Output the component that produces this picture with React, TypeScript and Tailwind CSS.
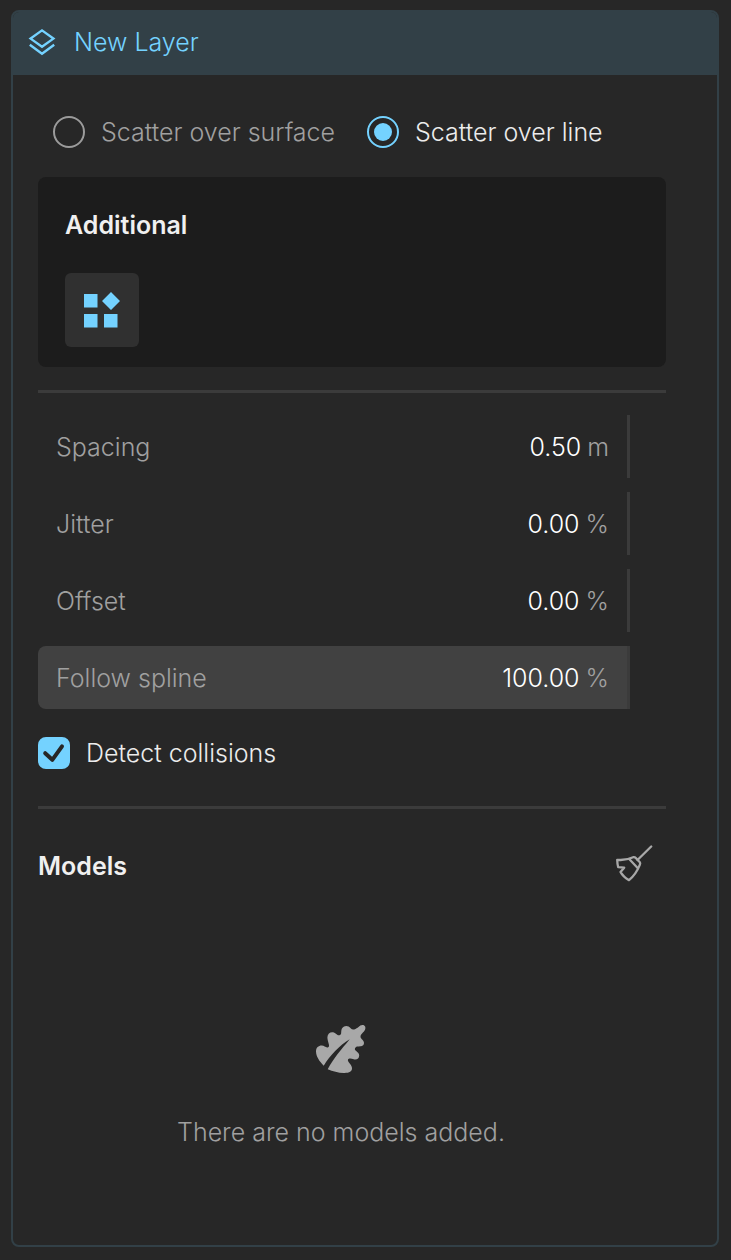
import { useState } from "react";

type Mode = "surface" | "line";

interface Param {
  id: string;
  label: string;
  value: string;
  unit: string;
  filled?: boolean;
}

const params: Param[] = [
  { id: "spacing", label: "Spacing", value: "0.50", unit: "m" },
  { id: "jitter", label: "Jitter", value: "0.00", unit: "%" },
  { id: "offset", label: "Offset", value: "0.00", unit: "%" },
  { id: "follow-spline", label: "Follow spline", value: "100.00", unit: "%", filled: true },
];

function LayersIcon() {
  return (
    <svg className="h-8 w-8 shrink-0" viewBox="0 0 32 32" fill="none" stroke="currentColor" strokeWidth="2.4" aria-hidden="true">
      <path d="M16 4.4 27.4 12.6 16 20.8 4.6 12.6Z" />
      <path d="M3.8 18.8 16 27.8 28.2 18.8" />
    </svg>
  );
}

function WidgetsIcon() {
  return (
    <svg className="h-[38px] w-[38px]" viewBox="0 0 38 38" fill="currentColor" aria-hidden="true">
      <path d="M1 3h13.5v13.5H1zM1 23h13.5v13.5H1zM21 23h13.5v13.5H21zM28 1l9 9-9 9-9-9z" />
    </svg>
  );
}

function BroomIcon() {
  return (
    <svg className="h-[38px] w-[38px]" viewBox="0 0 38 38" fill="none" stroke="currentColor" strokeWidth="2.3" strokeLinecap="round" strokeLinejoin="round" aria-hidden="true">
      <path d="M36.2 1.5 22.5 15" />
      <path d="M2.2 14.8C8 15.4 13.5 14.4 18.2 12.2Q19.7 11.8 20.8 13L24.8 17.2Q25.6 18.4 24.8 19.9C22.3 26 18.7 31.4 14 35.2C10.2 33 7.2 30.1 5.5 26.9L9.2 22.7 3.2 22.2Q2.3 18.9 2.2 14.8Z" />
      <path d="M14.2 14 22.9 23.2" />
    </svg>
  );
}

function LeafIcon() {
  return (
    <svg className="h-[52px] w-[52px]" viewBox="0 0 52 52" fill="currentColor" aria-hidden="true">
      <path d="M8.7 41.7C4.5 37.3 1 32.5 1 27.2C1 23.8 3.6 21.5 6.8 21.6C9.5 21.7 11 24.3 13.2 23.2C15.6 22 12.3 17.5 12.4 13.2C12.5 9.6 15.2 7.8 18 8.2C21.2 8.6 22.4 12.3 25 11.1C27.2 10 25.3 7 27.3 4C28.8 1.8 31.5 1.4 33.6 2.5C36 3.8 36.2 6 39.2 5.4C43 4.6 44.2 1 47.5 1C50.2 1 51 3.5 50 5.8C48.8 8.8 45 10.2 45.6 13.2C46 15.2 49 16 49 19C49 22.5 45 22.4 42.8 22.4C40.7 22.5 39.3 24.3 40.2 26.1C41 27.7 44.2 28.5 44.2 31.4C44.2 34.5 41.6 36.2 38.7 35.3C36.5 34.6 34 33.8 33 35.5C32 37.5 36.8 40.6 37 44C37.2 47.5 34.4 48.8 29.5 49C23.8 49.2 18 47.3 12.7 45.3C18.5 34.2 26.1 25.8 34.7 15.2C24.2 21.5 15.2 31.2 8.7 41.7Z" />
    </svg>
  );
}

function ModeRadio({ label, value, mode, onSelect }: { label: string; value: Mode; mode: Mode; onSelect: (m: Mode) => void }) {
  return (
    <label className="flex items-center gap-4 text-[#a0a0a0] has-checked:text-[#ececec]">
      <input
        type="radio"
        name="scatter-mode"
        value={value}
        checked={mode === value}
        onChange={() => onSelect(value)}
        className="grid size-8 shrink-0 appearance-none place-content-center rounded-full border-2 border-[#9b9b9b] before:size-[18px] before:rounded-full checked:border-[#74d2ff] checked:before:bg-[#74d2ff]"
      />
      {label}
    </label>
  );
}

function ParamRow({ param }: { param: Param }) {
  const [value, setValue] = useState(param.value);
  return (
    <div
      className={`flex h-[63px] items-center rounded-l-lg border-r-[3px] border-[#3b3b3b] pr-[18px] pl-[18px] text-[#a0a0a0] ${param.filled ? "bg-[#414141]" : ""}`}
    >
      <label htmlFor={param.id} className="flex-1">
        {param.label}
      </label>
      <input
        id={param.id}
        type="text"
        inputMode="decimal"
        value={value}
        onChange={(e) => setValue(e.target.value)}
        className="w-32 bg-transparent text-right text-white outline-none"
      />
      <span className="ml-1.5">{param.unit}</span>
    </div>
  );
}

export default function App() {
  const [mode, setMode] = useState<Mode>("line");
  const [detect, setDetect] = useState(true);

  return (
    <div className="flex min-h-screen flex-col bg-[#272727] pt-[10px] pr-3 pb-[13px] pl-[11px] font-['Inter',sans-serif] text-[25px] leading-8 font-light">
      <main className="flex flex-1 flex-col overflow-hidden rounded-lg border-2 border-[#324047]">
        <header className="flex h-[63px] items-center gap-4 bg-[#324047] pb-1 pl-[13px] text-[#74d2ff]">
          <LayersIcon />
          <h1>New Layer</h1>
        </header>

        <div className="flex flex-1 flex-col pt-[41px] pr-[51px] pl-[25px]">
          <div role="radiogroup" aria-label="Scatter mode" className="flex gap-8 pl-[15px]">
            <ModeRadio label="Scatter over surface" value="surface" mode={mode} onSelect={setMode} />
            <ModeRadio label="Scatter over line" value="line" mode={mode} onSelect={setMode} />
          </div>

          <section className="mt-[29px] rounded-lg bg-[#1c1c1c] px-[27px] pt-8 pb-5">
            <h2 className="font-semibold text-[#f0f0f0]">Additional</h2>
            <button
              type="button"
              aria-label="Widgets"
              className="mt-8 flex size-[74px] items-center justify-center rounded-md bg-[#303030] text-[#74d2ff]"
            >
              <WidgetsIcon />
            </button>
          </section>

          <hr className="mt-[23px] border-t-[3px] border-[#3b3b3b]" />

          <div className="mt-[22px] mr-9 flex flex-col gap-[14px]">
            {params.map((param) => (
              <ParamRow key={param.id} param={param} />
            ))}
          </div>

          <label className="mt-7 flex items-center gap-4 text-[#ececec]">
            <span className="grid size-8 shrink-0">
              <input
                type="checkbox"
                checked={detect}
                onChange={(e) => setDetect(e.target.checked)}
                className="peer col-start-1 row-start-1 size-8 appearance-none rounded-lg border-2 border-[#9b9b9b] checked:border-[#74d2ff] checked:bg-[#74d2ff]"
              />
              <svg className="pointer-events-none invisible col-start-1 row-start-1 size-8 peer-checked:visible" viewBox="0 0 32 32" fill="none" stroke="#272727" strokeWidth="4" strokeLinecap="round" strokeLinejoin="round" aria-hidden="true">
                <path d="M7.2 16.2 14.3 22.8 24 9.3" />
              </svg>
            </span>
            Detect collisions
          </label>

          <hr className="mt-[37px] border-t-[3px] border-[#3b3b3b]" />

          <section className="flex flex-1 flex-col">
            <div className="mt-9 flex items-center justify-between pr-[13px]">
              <h2 className="pt-1 font-semibold text-[#f0f0f0]">Models</h2>
              <button type="button" aria-label="Clear models" className="text-[#a8a8a8]">
                <BroomIcon />
              </button>
            </div>
            <div className="flex flex-1 flex-col items-center justify-center gap-10 pt-11 pr-[22px] text-[#a8a8a8]">
              <LeafIcon />
              <p className="text-[#a0a0a0]">There are no models added.</p>
            </div>
          </section>
        </div>
      </main>
    </div>
  );
}
